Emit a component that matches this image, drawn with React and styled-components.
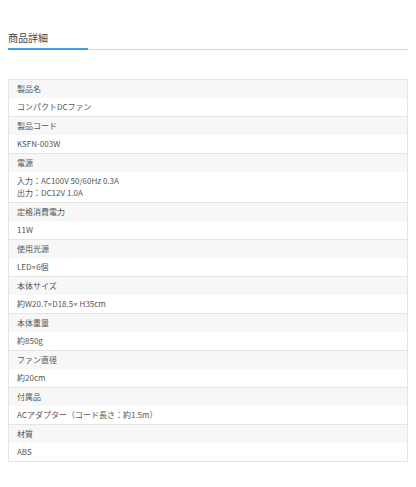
import React from 'react'
import styled, { createGlobalStyle } from 'styled-components'

const GlobalStyle = createGlobalStyle`
    body {
        margin: 0;
        background: #fff;
        font-family: 'Noto Sans CJK JP', 'Open Sans', sans-serif;
    }
`

const Page = styled.div`
    width: 400px;
    padding: 0 8px;
`

const Heading = styled.h2`
    position: relative;
    margin: 31px 0 0;
    padding-bottom: 5px;
    font-size: 10px;
    line-height: 13px;
    font-weight: 400;
    color: #444;
    border-bottom: 1px solid #d4d4d4;

    &::after {
        content: '';
        position: absolute;
        left: 0;
        bottom: -1px;
        width: 80px;
        height: 2px;
        background: #3f9fe8;
    }
`

const SpecTable = styled.table`
    width: 100%;
    margin-top: 29px;
    border-collapse: collapse;
    border: 1px solid #e4e4e4;
    font-size: 8px;
    line-height: 12px;
    color: #555;
`

const Cell = styled.td`
    padding: 3px 8px;
    background: ${p => (p.$label ? '#f7f7f7' : '#fff')};
    border-top: ${p => (p.$label ? '1px solid #e4e4e4' : 'none')};
`

// narrow latin multiplication sign, as in the original
const Times = styled.span`
    font-family: 'Open Sans', sans-serif;
`

const specs = [
    ['製品名', ['コンパクトDCファン']],
    ['製品コード', ['KSFN-003W']],
    ['電源', ['入力：AC100V 50/60Hz 0.3A', '出力：DC12V 1.0A']],
    ['定格消費電力', ['11W']],
    ['使用光源', ['LED×6個']],
    ['本体サイズ', ['約W20.7×D18.5× H35cm']],
    ['本体重量', ['約850g']],
    ['ファン直径', ['約20cm']],
    ['付属品', ['ACアダプター（コード長さ：約1.5m）']],
    ['材質', ['ABS']],
]

const withTimes = text =>
    text.split('×').map((part, i) => (
        <React.Fragment key={i}>
            {i > 0 && <Times>×</Times>}
            {part}
        </React.Fragment>
    ))

export default function App() {
    return (
        <Page>
            <GlobalStyle />
            <Heading>商品詳細</Heading>
            <SpecTable>
                <tbody>
                    {specs.map(([label, lines]) => (
                        <React.Fragment key={label}>
                            <tr>
                                <Cell $label>{label}</Cell>
                            </tr>
                            <tr>
                                <Cell>
                                    {lines.map((l, i) => (
                                        <div key={i}>{withTimes(l)}</div>
                                    ))}
                                </Cell>
                            </tr>
                        </React.Fragment>
                    ))}
                </tbody>
            </SpecTable>
        </Page>
    )
}
